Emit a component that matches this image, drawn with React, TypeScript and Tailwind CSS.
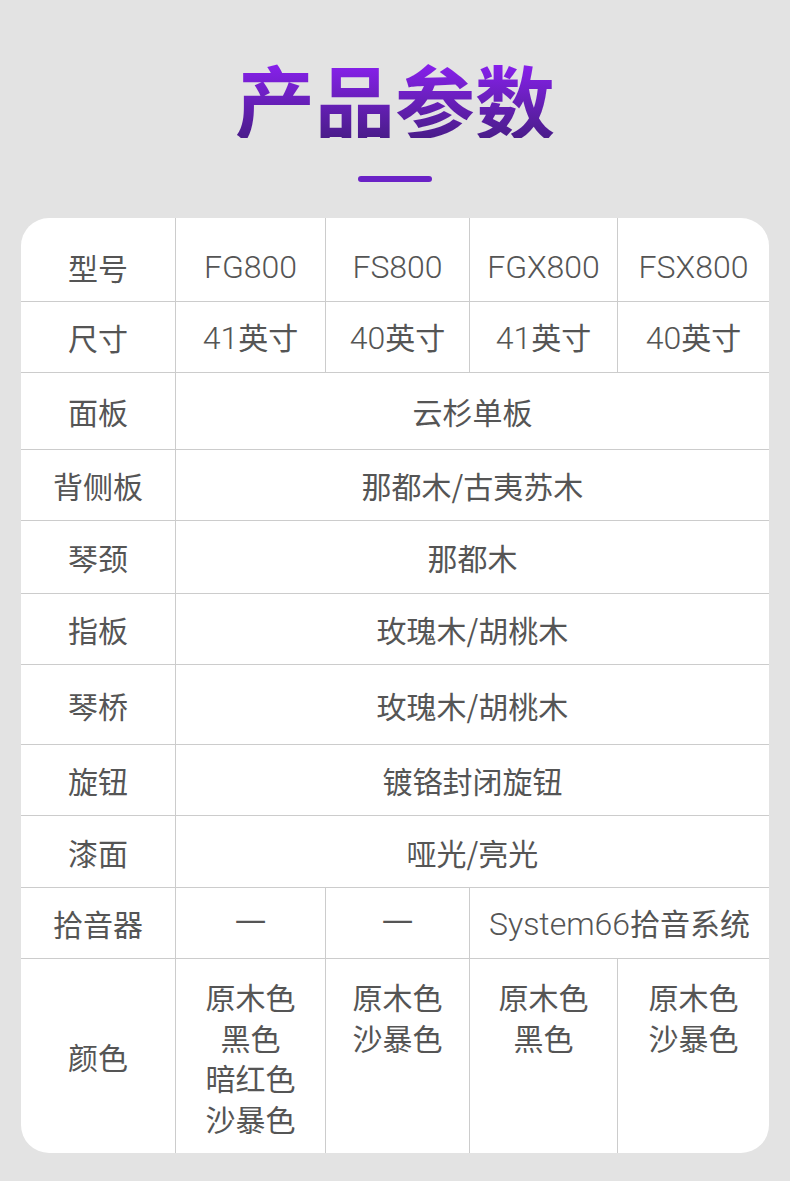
import React from "react";

const font = { fontFamily: '"Noto Sans CJK SC", "Noto Sans", sans-serif' };

function L({ children, className = "text-[32px]" }: { children: React.ReactNode; className?: string }) {
  return (
    <span
      className={"font-light " + className}
      style={{ fontFamily: 'Roboto, "Noto Sans CJK SC", sans-serif' }}
    >
      {children}
    </span>
  );
}

function Cell({
  children,
  className = "",
}: {
  children?: React.ReactNode;
  className?: string;
}) {
  return (
    <div
      className={
        "flex items-center justify-center text-center text-[30px] leading-none text-[#555555] border-[#cccccc] " +
        className
      }
    >
      <span>{children}</span>
    </div>
  );
}

export default function App() {
  const colorCells: string[][] = [
    ["原木色", "黑色", "暗红色", "沙暴色"],
    ["原木色", "沙暴色"],
    ["原木色", "黑色"],
    ["原木色", "沙暴色"],
  ];
  const spanRows: [string, string][] = [
    ["面板", "云杉单板"],
    ["背侧板", "那都木/古夷苏木"],
    ["琴颈", "那都木"],
    ["指板", "玫瑰木/胡桃木"],
    ["琴桥", "玫瑰木/胡桃木"],
    ["旋钮", "镀铬封闭旋钮"],
    ["漆面", "哑光/亮光"],
  ];
  return (
    <div className="min-h-[1181px] w-[790px] bg-[#e3e3e3]" style={font}>
      <div className="flex flex-col items-center pt-[58px]">
        <h1 className="bg-gradient-to-b from-[#8d1ff5] to-[#4a1c8a] bg-clip-text text-[80px] font-bold leading-none text-transparent">
          产品参数
        </h1>
        <div className="mt-[38px] h-[6px] w-[74px] rounded-full bg-[#6a22c6]" />
      </div>
      <div className="mx-[21px] mt-[36px] overflow-hidden rounded-[28px] bg-white">
        <div className="grid grid-cols-[154px_150px_144px_148px_152px] grid-rows-[83px_71px_77px_71px_73px_71px_80px_71px_72px_71px_195px]">
          <Cell className="pt-[14px]">型号</Cell>
          <Cell className="border-l pt-[14px]"><L>FG800</L></Cell>
          <Cell className="border-l pt-[14px]"><L>FS800</L></Cell>
          <Cell className="border-l pt-[14px]"><L>FGX800</L></Cell>
          <Cell className="border-l pt-[14px]"><L>FSX800</L></Cell>

          <Cell className="border-t">尺寸</Cell>
          <Cell className="border-t border-l"><L>41</L>英寸</Cell>
          <Cell className="border-t border-l"><L>40</L>英寸</Cell>
          <Cell className="border-t border-l"><L>41</L>英寸</Cell>
          <Cell className="border-t border-l"><L>40</L>英寸</Cell>

          {spanRows.map(([k, v]) => (
            <React.Fragment key={k + v}>
              <Cell className="border-t">{k}</Cell>
              <Cell className="col-span-4 border-t border-l">{v}</Cell>
            </React.Fragment>
          ))}

          <Cell className="border-t">拾音器</Cell>
          <Cell className="border-t border-l"><L className="text-[44px]">—</L></Cell>
          <Cell className="border-t border-l"><L className="text-[44px]">—</L></Cell>
          <Cell className="col-span-2 border-t border-l"><L>System66</L>拾音系统</Cell>

          <Cell className="border-t">颜色</Cell>
          {colorCells.map((lines, i) => (
            <div
              key={i}
              className="flex flex-col items-center border-l border-t border-[#cccccc] pt-[17px] text-[30px] leading-[40.5px] text-[#555555]"
            >
              {lines.map((l) => (
                <span key={l}>{l}</span>
              ))}
            </div>
          ))}
        </div>
      </div>
    </div>
  );
}
